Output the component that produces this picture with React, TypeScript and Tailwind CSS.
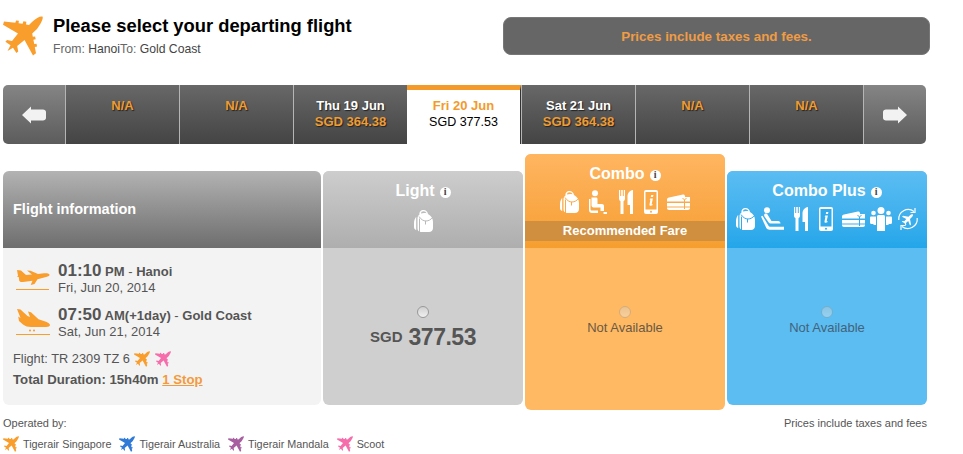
const dates = [
  { label: "", price: "", na: true },
  { label: "", price: "", na: true },
  { label: "Thu 19 Jun", price: "SGD 364.38", na: false },
  { label: "Fri 20 Jun", price: "SGD 377.53", na: false, selected: true },
  { label: "Sat 21 Jun", price: "SGD 364.38", na: false },
  { label: "", price: "", na: true },
  { label: "", price: "", na: true },
];

const operators = [
  { name: "Tigerair Singapore", color: "#f99d2c" },
  { name: "Tigerair Australia", color: "#2f7ad6" },
  { name: "Tigerair Mandala", color: "#a75fa0" },
  { name: "Scoot", color: "#f56eab" },
];

const Plane = ({ color, className }: { color: string; className: string }) => (
  <svg viewBox="0 0 40 40" className={className} fill={color}>
    <path d="M39.5.5C37 0 33 2 29 6l-3 3-3-.6.4-2.6-3-.5-.8 2.5-4-.6.3-2.4-2.8-.4-.8 2.3L1 5.5 0 8.8 15 17.5l-6 7.5-5-1-1.600 1.800 5.100 3.400L4.500 35l5.500-3.300L13.400 37l1.800-1.600-1-5.400L21.500 24l8.500 15.500 3-2.300-1.200-6.200 2.300-.5-.6-2.800-2.300.4-.8-4.400 2.300-.4-.6-2.800-2.300.3-.6-3.200 4.800-4.600C38 7 40.500 3 39.500.5z" />
  </svg>
);

const Takeoff = () => (
  <svg viewBox="0 0 34 24" className="mt-[5px] h-6 w-[34px] shrink-0" fill="#f99d2c">
    <path d="M1 2l4 .5 5 4.500 6-.6L11 2.500l3.500.3L22 6l6-.7c2.500-.3 5 .2 5.500 1.200.4 1-1 2-3.500 2.600l-8.500 2.200-3 4.700-3.800 1 1.800-4.300L7 14c-2 .4-3.300-.3-3.800-1.500L2.800 9 1 8.800l1-1z" />
    <rect x="0" y="21" width="33" height="1" />
  </svg>
);

const Landing = () => (
  <svg viewBox="0 0 35 26" className="mt-[2px] h-[26px] w-[35px] shrink-0" fill="#f99d2c">
    <path d="M1 0l3.500.5 7 6.500 2.500 1L12 2.500l3 .8 7.500 7 6 2c3 1 5.500 2.200 5.500 3.700 0 1.200-1.500 2-4 2H15c-3 0-6-.8-8-2.500L3 12l-.8-4.500L4.500 9z" />
    <circle cx="14" cy="21.500" r="1" />
    <circle cx="18" cy="21.500" r="1" />
    <rect x="0" y="25" width="34" height="1" />
  </svg>
);

const Backpack = ({ cut }: { cut: string }) => (
  <svg viewBox="0 0 19 22" className="h-[22px] w-[19px]" fill="white">
    <path d="M3 6C1 7.500 0 10.500 0 13v4c0 1.500.8 2.500 2.200 3.200V7z" />
    <path fillRule="evenodd" d="M5.500 4.500C5 2 7 0 9.500 0s4.300 1.800 4.500 4c3 1.500 5 4.500 5 8v6c0 2.400-1.800 4-4 4H7c-2 0-3.500-1.300-3.500-3.500V8.500c0-1.600.7-3 2-4zM7 3.500c1.800-.7 3.800-.7 5.500-.2-.4-1.200-1.600-2-3-2S7 2.200 7 3.500z" />
    <path d="M5 6.500c2 3 4.500 4.500 7 4.500 2.500 0 5-1.500 6.500-3.500M11.500 11v3.500M5.500 8.500V22" fill="none" stroke={cut} strokeWidth="1" />
  </svg>
);

const SeatUp = () => (
  <svg viewBox="0 0 18 24" className="h-6 w-[18px]" fill="white">
    <circle cx="6" cy="3.200" r="3" />
    <path d="M2.500 7.500h4.500c1 0 1.500.7 1.500 1.500v5h4.500c1.200 0 2 .8 2 2v5h-3.500v-3.500H4.500c-1 0-2-.8-2-2z" />
    <path d="M0 9h1.500v10c0 1 .5 1.500 1.500 1.500h6V23H3c-2 0-3-1.300-3-3z" />
    <path d="M14.500 22h3.500v2h-3.500z" />
  </svg>
);

const SeatRecline = () => (
  <svg viewBox="0 0 23 24" className="h-6 w-[23px]" fill="white">
    <circle cx="6" cy="3.200" r="3" />
    <path d="M3.500 7c1-.8 2.500-.5 3 .5l4 6.500h6.500c1.500 0 2.500 1 2.500 2.500H9.500c-.8 0-1.400-.3-1.800-1L3.500 9.500c-.5-.8-.5-1.800 0-2.500z" />
    <path d="M0 9.500l1.500-.8 6 10c.5.800 1 1 2 1H23v3H8.500c-1.500 0-2.500-.5-3.200-1.700z" />
  </svg>
);

const Cutlery = () => (
  <svg viewBox="0 0 14 24" className="h-6 w-3.5" fill="white">
    <path d="M0 0h1.200v6h1V0h1.600v6h1V0H6v8.500c0 1.500-.7 2.200-1.500 2.700V24h-3V11.200C.7 10.700 0 10 0 8.500z" />
    <path d="M14 0v24h-3v-9H8.500V7C8.500 3 10.500.5 14 0z" />
  </svg>
);

const Phone = ({ cut }: { cut: string }) => (
  <svg viewBox="0 0 14 24" className="h-6 w-3.5" fill="white">
    <rect width="14" height="24" rx="2" />
    <rect x="1.500" y="2" width="11" height="17.500" fill={cut} />
    <circle cx="7" cy="21.700" r="1" fill={cut} />
    <path d="M7.200 5h2.200l-.4 2H6.800zM6.300 8.500h2.600L7.700 14c-.1.500.3.600 1.200.2l-.1.900c-1.700.9-3.600.9-3.300-.7l.9-4.700-.8-.1z" />
  </svg>
);

const Tickets = ({ cut }: { cut: string }) => (
  <svg viewBox="0 0 23 16" className="h-4 w-[23px]" fill="white">
    <path d="M2 3.500L16 .5c1-.2 1.500.2 1.800 1l.4 1.500H23v4.500H0V5.500c0-1 .8-1.800 2-2z" />
    <path d="M0 9h23v3.500H0zM0 13.500h23V14c0 1.200-.8 2-2 2H2c-1.200 0-2-.8-2-2z" />
    <path d="M15.500 4l2 2 2-2M17.500 6v9" stroke={cut} strokeWidth="1" fill="none" />
  </svg>
);

const People = () => (
  <svg viewBox="0 0 22 24" className="h-6 w-[22px]" fill="white">
    <circle cx="11" cy="3.500" r="3.500" />
    <circle cx="3.500" cy="6" r="2.300" />
    <circle cx="18.500" cy="6" r="2.300" />
    <path d="M7 9.500c0-1 .8-1.500 1.800-1.500h4.400c1 0 1.800.5 1.800 1.500V24H7z" />
    <path d="M1 9.500h4.500c.5 0 .5.500.5 1V18H3.500v-1H1.500C.5 17 0 16.300 0 15.500V11c0-1 .3-1.500 1-1.500z" />
    <path d="M16.500 9.500H21c.7 0 1 .5 1 1.500v4.500c0 .8-.5 1.500-1.500 1.500h-2v1H16v-7.500c0-.5 0-1 .5-1z" />
  </svg>
);

const Rebook = () => (
  <svg viewBox="0 0 22 24" className="h-6 w-[22px]" fill="none" stroke="white" strokeWidth="1.200">
    <path d="M1.800 13A9.500 9.500 0 0 1 17 4.500" />
    <path d="M20.200 11A9.500 9.500 0 0 1 5 19.500" />
    <path d="M18 1v4.500h-4.500M4 23v-4.500h4.500" />
    <path d="M16 7.500c-1-.6-2-.2-3 .8l-1.500 1.500-5.500-1-1 1 4.300 2.300-2 2.200-1.800-.3-.6.700 2.500 1.200 1.200 2.500.7-.6-.3-1.800 2.200-2L13 18.500l1-1-1-5.500 1.500-1.500c1-1 1.800-2 1.500-3z" fill="white" stroke="none" />
  </svg>
);

const Info = () => (
  <span className="ml-[5px] mt-[2px] inline-flex h-[11px] w-[11px] items-center justify-center rounded-full bg-white font-['Liberation_Serif',serif] text-[10px] font-bold leading-none text-[#444]">
    i
  </span>
);

const Radio = ({ dim }: { dim?: boolean }) => (
  <span
    className={`block h-3 w-3 rounded-full border border-[#999] bg-gradient-to-b from-[#d0d0d0] to-[#f0f0f0] ${dim ? "opacity-40" : ""}`}
  />
);

const DateCell = ({ item }: { item: (typeof dates)[number] }) => {
  if (item.selected) {
    return (
      <div className="flex w-[114px] flex-col items-center border-t-[5px] border-r border-t-[#f39a2b] border-r-[#333] bg-white pt-2 text-[13px] leading-4">
        <span className="font-bold text-[#f39a2b]">{item.label}</span>
        <span className="text-[12.5px] text-black">{item.price}</span>
      </div>
    );
  }
  return (
    <div className="flex w-[114px] flex-col items-center border-l border-l-[#b5b5b5] bg-gradient-to-b from-[#686868] to-[#444] pt-[13px] text-[13px] font-bold leading-4 [text-shadow:1px_1px_1px_#222]">
      {item.na ? (
        <span className="text-[#ef9c33]">N/A</span>
      ) : (
        <>
          <span className="text-white">{item.label}</span>
          <span className="text-[#ef9c33]">{item.price}</span>
        </>
      )}
    </div>
  );
};

export default function App() {
  return (
    <div className="h-[454px] w-[963px] overflow-hidden bg-white pl-[3px] font-['Liberation_Sans',Arial,sans-serif]">
      <div className="flex h-[85px] items-start">
        <Plane color="#f99d2c" className="mt-4 h-10 w-10" />
        <div className="ml-[10px] w-[450px] pt-[15px]">
          <h1 className="text-[18.35px] font-bold leading-[22px] text-black">Please select your departing flight</h1>
          <p className="mt-[5px] text-[12.2px] leading-[14px] text-[#666]">
            From: <span className="text-[#444]">Hanoi</span>To: <span className="text-[#444]">Gold Coast</span>
          </p>
        </div>
        <div className="mt-[17px] flex h-[38px] w-[427px] items-center justify-center rounded-lg border border-[#777] bg-[#666] pt-[2px] text-[13.4px] font-bold text-[#ef9c45]">
          Prices include taxes and fees.
        </div>
      </div>

      <div className="flex h-[59px] w-[923px] overflow-hidden rounded-[5px]">
        <div className="flex w-[62px] items-center justify-center bg-gradient-to-b from-[#858585] to-[#5c5c5c]">
          <svg viewBox="0 0 24 18" className="h-[18px] w-6" fill="#f2f2f2">
            <path d="M0 9l9-8.500V3.500h12c1.600 0 3 1 3 2.500v6c0 1.500-1.400 2.500-3 2.500H9v3z" />
          </svg>
        </div>
        {dates.map((item, index) => (
          <DateCell key={index} item={item} />
        ))}
        <div className="flex w-[63px] items-center justify-center border-l border-l-[#b5b5b5] bg-gradient-to-b from-[#858585] to-[#5c5c5c]">
          <svg viewBox="0 0 24 18" className="h-[18px] w-6" fill="#f2f2f2">
            <path d="M24 9L15 .5v3H3C1.400 3.500 0 4.500 0 6v6c0 1.500 1.400 2.500 3 2.500h12v3z" />
          </svg>
        </div>
      </div>

      <div className="mt-[10px] flex items-start gap-[2px]">
        <div className="mt-[17px] h-[234px] w-[318px] overflow-hidden rounded-md bg-[#f3f3f3] text-[#555]">
          <div className="flex h-[77px] items-center bg-gradient-to-b from-[#b3b3b3] to-[#6e6e6e] pl-[10px] text-[14.5px] font-bold text-white">
            Flight information
          </div>
          <div className="pl-[13px] pt-[15px]">
            <div className="flex h-11 items-start gap-2">
              <Takeoff />
              <div className="leading-4">
                <div className="text-[13px] font-bold">
                  <span className="text-[17px] leading-4">01:10</span> PM <span className="font-normal">-</span> Hanoi
                </div>
                <div className="text-[13px]">Fri, Jun 20, 2014</div>
              </div>
            </div>
            <div className="flex h-11 items-start gap-[7px]">
              <Landing />
              <div className="leading-4">
                <div className="text-[13px] font-bold">
                  <span className="text-[17px] leading-4">07:50</span> AM(+1day) <span className="font-normal">-</span> Gold Coast
                </div>
                <div className="text-[13px]">Sat, Jun 21, 2014</div>
              </div>
            </div>
            <div className="-ml-[3px] flex items-center gap-1 text-[12.8px] leading-4">
              <span>Flight: TR 2309 TZ 6</span>
              <Plane color="#f99d2c" className="h-4 w-4" />
              <Plane color="#f56eab" className="ml-[1px] h-4 w-4" />
            </div>
            <div className="-ml-[3px] mt-[5px] text-[13.2px] font-bold leading-4">
              Total Duration: 15h40m{" "}
              <span className="text-[#f39a3c] underline">1 Stop</span>
            </div>
          </div>
        </div>

        <div className="mt-[17px] h-[234px] w-[200px] overflow-hidden rounded-md bg-[#cfcfcf]">
          <div className="flex h-[77px] flex-col items-center bg-gradient-to-b from-[#cdcdcd] to-[#aeaeae] pt-[10px]">
            <div className="flex items-center text-base font-bold leading-5 text-white">
              Light
              <Info />
            </div>
            <div className="mt-[9px]">
              <Backpack cut="#b9b9b9" />
            </div>
          </div>
          <div className="flex flex-col items-center pt-[58px] text-[#555]">
            <Radio />
            <div className="mt-[7px] flex items-center gap-[6px] font-bold">
              <span className="text-[15px] leading-5">SGD</span>
              <span className="text-[23px] leading-6 tracking-[-0.5px]">377.53</span>
            </div>
          </div>
        </div>

        <div className="h-[256px] w-[200px] overflow-hidden rounded-md bg-[#ffb963]">
          <div className="flex h-[94px] flex-col items-center bg-gradient-to-b from-[#ffb560] to-[#f69e2f]">
            <div className="mt-[10px] flex items-center text-base font-bold leading-5 text-white">
              Combo
              <Info />
            </div>
            <div className="mt-[6px] flex h-6 items-center">
              <Backpack cut="#fca945" />
              <div className="ml-[10px]"><SeatUp /></div>
              <div className="ml-3"><Cutlery /></div>
              <div className="ml-[11px]"><Phone cut="#fca945" /></div>
              <div className="ml-[9px]"><Tickets cut="#fca945" /></div>
            </div>
            <div className="mt-[7px] flex h-5 w-full items-center justify-center bg-[#cf8f3f] text-[13px] font-bold text-white">
              Recommended Fare
            </div>
          </div>
          <div className="flex flex-col items-center pt-[58px] text-[13px] text-[#6a5a44]">
            <Radio dim />
            <div className="mt-[2px] leading-4">Not Available</div>
          </div>
        </div>

        <div className="mt-[17px] h-[234px] w-[200px] overflow-hidden rounded-md bg-[#5bbdf2]">
          <div className="flex h-[77px] flex-col items-center bg-gradient-to-b from-[#5bbdf2] to-[#22a6ea] pt-[10px]">
            <div className="flex items-center text-base font-bold leading-5 text-white">
              Combo Plus
              <Info />
            </div>
            <div className="mt-[6px] flex h-6 items-center">
              <Backpack cut="#33aaec" />
              <div className="ml-[6px]"><SeatRecline /></div>
              <div className="ml-[10px]"><Cutlery /></div>
              <div className="ml-[11px]"><Phone cut="#33aaec" /></div>
              <div className="ml-[9px]"><Tickets cut="#33aaec" /></div>
              <div className="ml-[5px]"><People /></div>
              <div className="ml-[5px]"><Rebook /></div>
            </div>
          </div>
          <div className="flex flex-col items-center pt-[58px] text-[13px] text-[#43637a]">
            <Radio dim />
            <div className="mt-[2px] leading-4">Not Available</div>
          </div>
        </div>
      </div>

      <div className="flex h-[42px] w-[924px] items-start justify-between pt-[6px] text-[11px] leading-[14px] text-[#555]">
        <div>
          <div>Operated by:</div>
          <div className="mt-[6px] flex items-center text-[10.8px]">
            {operators.map((op) => (
              <div key={op.name} className="mr-2 flex items-center gap-1">
                <Plane color={op.color} className="h-4 w-4" />
                <span>{op.name}</span>
              </div>
            ))}
          </div>
        </div>
        <div>Prices include taxes and fees</div>
      </div>
    </div>
  );
}
